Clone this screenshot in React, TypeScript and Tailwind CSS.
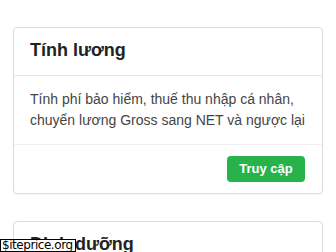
import React from "react";

const font = { fontFamily: '"Liberation Sans", Arial, sans-serif' };

function Card({ title, children, footer }: { title: string; children?: React.ReactNode; footer?: boolean }) {
  return (
    <div className="rounded-[4px] border border-[#dcdcdc] bg-white shadow-[0_1px_2px_rgba(0,0,0,0.04)]">
      <div className="border-b border-[#e6e6e6] pl-4 pr-4 pt-[9px] pb-[11px]">
        <h2 className="text-[18px] leading-[27px] font-bold text-[#222]">{title}</h2>
      </div>
      {children && (
        <div className="px-4 py-[13px] text-[14px] leading-[21px] text-[#444]">{children}</div>
      )}
      {footer && (
        <div className="flex justify-end border-t border-[#efefef] pt-[11px] pb-[11px] pr-[17px]">
          <button className="h-[26px] w-[78px] rounded-[4px] bg-[#27b34a] text-[13px] font-bold text-white">
            Truy cập
          </button>
        </div>
      )}
    </div>
  );
}

export default function App() {
  return (
    <div className="relative h-[252px] w-[336px] overflow-hidden bg-white" style={font}>
      <div className="flex flex-col gap-[27px] px-[13px] pt-[27px]">
        <Card title="Tính lương" footer>
          Tính phí bảo hiểm, thuế thu nhập cá nhân, chuyển lương Gross sang NET và ngược lại
        </Card>
        <Card title="Dinh dưỡng">
          Tính lượng calo cần thiết
        </Card>
      </div>
      <div
        className="absolute bottom-0 left-0 h-[13px] border border-black bg-white pl-[1px] pr-[2px] text-[12px] leading-[11px] tracking-[-0.45px] text-black"
        style={{ fontFamily: '"DejaVu Sans", sans-serif' }}
      >
        $iteprice.org
      </div>
    </div>
  );
}
